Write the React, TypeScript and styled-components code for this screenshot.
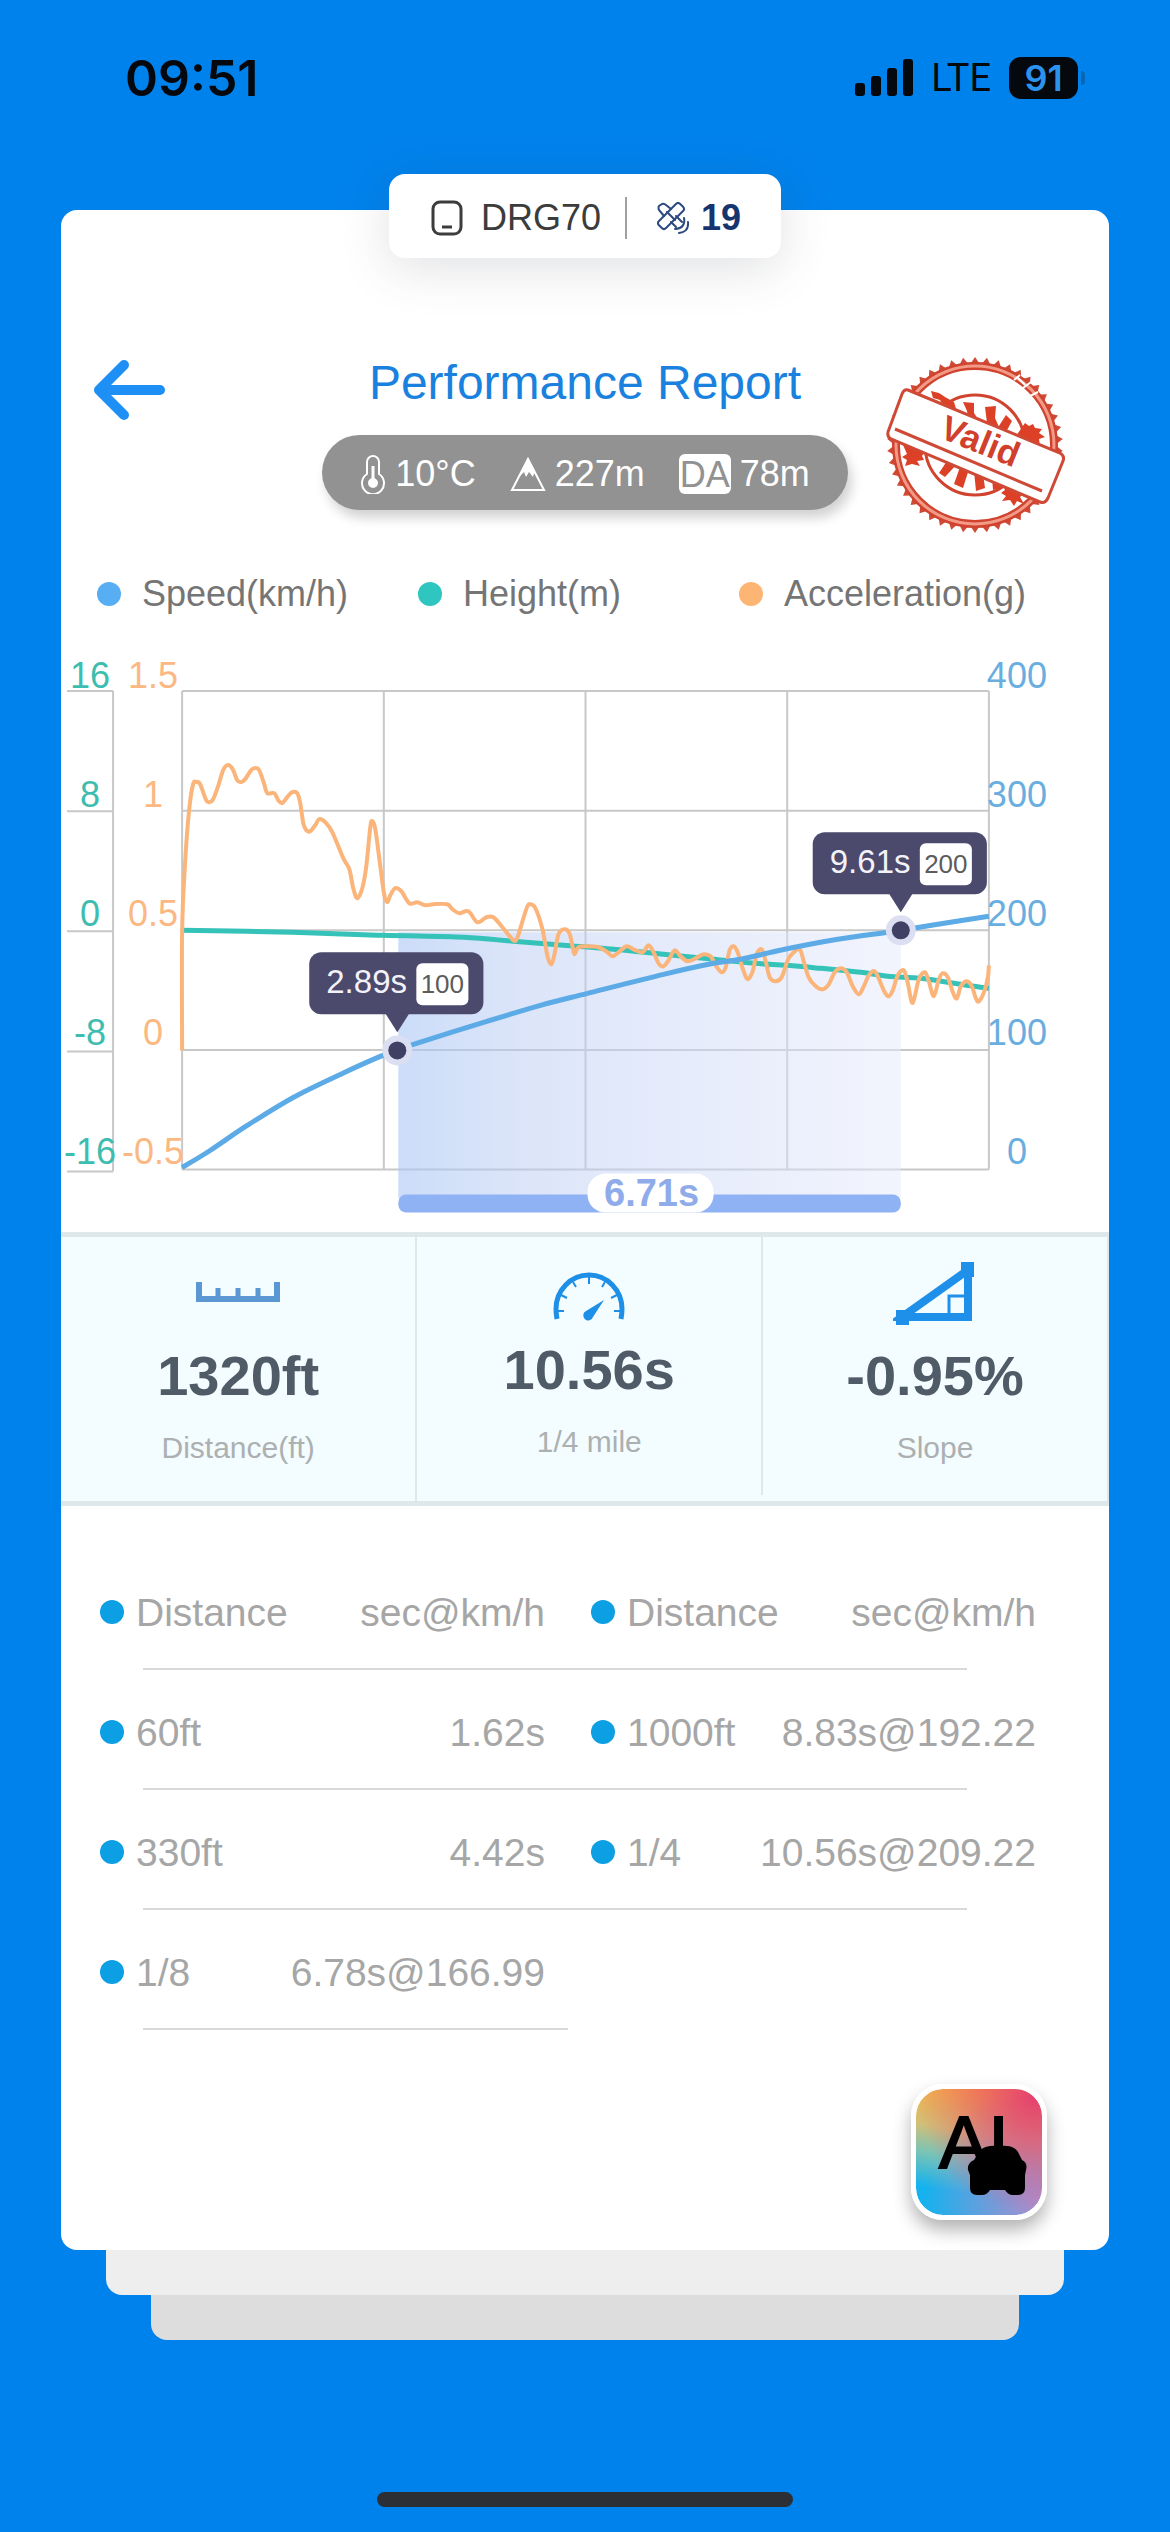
import React from 'react';
import styled, { createGlobalStyle } from 'styled-components';

const GlobalStyle = createGlobalStyle`
	* {
		box-sizing: border-box;
	}

	body {
		margin: 0;
		background-color: #0082ec;
		font-family: 'Liberation Sans', Arial, sans-serif;
	}
`;

const Page = styled.div`
	display: flex;
	flex-direction: column;
	min-height: 100vh;
	background-color: #0082ec;
`;

const StatusBar = styled.div`
	display: flex;
	align-items: center;
	justify-content: space-between;
	height: 156px;
	padding: 0 82px 0 125px;
	color: #05080c;
`;

const Clock = styled.time`
	font-family: Inter, sans-serif;
	font-size: 50px;
	font-weight: 600;
`;

const StatusIcons = styled.div`
	display: flex;
	align-items: center;
	gap: 18px;
`;

const Network = styled.span`
	font-family: Roboto, sans-serif;
	font-size: 38px;
`;

const Battery = styled.span`
	position: relative;
	width: 69px;
	height: 42px;
	margin-right: 10px;
	border-radius: 12px;
	background-color: #05080c;
	color: #2b93ee;
	font-family: Inter, sans-serif;
	font-size: 36px;
	font-weight: 600;
	line-height: 42px;
	text-align: center;

	&::after {
		content: '';
		position: absolute;
		top: 14px;
		right: -7px;
		width: 4px;
		height: 14px;
		border-radius: 0 4px 4px 0;
		background-color: #0a66b4;
	}
`;

const DevicePill = styled.div`
	position: relative;
	z-index: 1;
	display: flex;
	align-items: center;
	align-self: center;
	gap: 18px;
	height: 84px;
	margin: 18px 0 -48px;
	padding: 4px 40px 0 42px;
	border-radius: 16px;
	background-color: #ffffff;
	box-shadow: 0 10px 50px rgba(60, 70, 80, 0.16);
	color: #3c3c3c;
	font-size: 36px;
`;

const PillDivider = styled.span`
	width: 2px;
	height: 42px;
	margin: 0 12px 0 6px;
	background-color: #a0a0a0;
`;

const Satellites = styled.span`
	display: flex;
	align-items: center;
	gap: 12px;
	color: #17346f;
	font-weight: 700;
`;

const Card = styled.main`
	margin: 0 61px;
	padding: 145px 0 30px;
	border-radius: 16px;
	background-color: #ffffff;
`;

const Layer = styled.div<{ inset: number; color: string }>`
	height: 45px;
	margin: 0 ${({ inset }) => inset}px;
	border-radius: 0 0 16px 16px;
	background-color: ${({ color }) => color};
`;

const Header = styled.header`
	display: grid;
	grid-template-columns: 1fr auto 1fr;
	padding: 0 32px;
`;

const BackButton = styled.button`
	align-self: start;
	justify-self: start;
	display: flex;
	margin: 5px 0 0;
	padding: 0;
	border: 0;
	background: none;
	cursor: pointer;
`;

const HeaderCenter = styled.div`
	display: flex;
	flex-direction: column;
	align-items: center;
	gap: 24px;
`;

const Title = styled.h1`
	margin: 0;
	color: #1a82de;
	font-size: 48px;
	font-weight: 400;
	line-height: 56px;
	white-space: nowrap;
`;

const Weather = styled.div`
	display: flex;
	align-items: center;
	gap: 34px;
	height: 75px;
	padding: 2px 38px 0;
	border-radius: 38px;
	background-color: #929292;
	box-shadow: 4px 8px 12px rgba(0, 0, 0, 0.18);
	color: #ffffff;
	font-size: 36px;
`;

const WeatherItem = styled.span`
	display: flex;
	align-items: center;
	gap: 9px;
`;

const AltitudeTag = styled.abbr`
	height: 40px;
	padding: 0 1px;
	border-radius: 6px;
	background-color: #ffffff;
	color: #929292;
	line-height: 42px;
`;

const Stamp = styled.svg`
	justify-self: end;
`;

const Legend = styled.ul`
	display: grid;
	grid-template-columns: repeat(3, 1fr);
	margin: 37px 0 24px;
	padding: 0 49px 0 36px;
	list-style: none;
	color: #757575;
	font-size: 36px;
	line-height: 44px;
	white-space: nowrap;
`;

const LegendItem = styled.li<{ color: string }>`
	display: flex;
	align-items: center;
	gap: 21px;

	&::before {
		content: '';
		width: 24px;
		height: 24px;
		border-radius: 50%;
		background-color: ${({ color }) => color};
	}
`;

const ChartSvg = styled.svg`
	display: block;
	width: 100%;
	font-size: 36px;
`;

const Stats = styled.section`
	display: grid;
	grid-template-columns: 34% 33% 33%;
	border-top: 5px solid #dce8ea;
	border-bottom: 5px solid #dce8ea;
	background-color: #f3fcfe;
`;

const Stat = styled.div<{ raised?: boolean }>`
	display: flex;
	flex-direction: column;
	align-items: center;
	height: ${({ raised }) => (raised ? 258 : 264)}px;
	padding-top: ${({ raised }) => (raised ? 17 : 23)}px;
	border-right: 2px solid #dce8ea;
`;

const StatValue = styled.strong`
	color: #4f5b66;
	font-size: 56px;
	line-height: 64px;
`;

const StatLabel = styled.span`
	margin-top: 22px;
	color: #acb0b1;
	font-size: 30px;
	line-height: 36px;
`;

const Results = styled.table`
	display: block;
	margin: 44px 73px 0 39px;
	color: #a6a6a6;
	font-size: 39px;
	line-height: 48px;
	white-space: nowrap;

	thead,
	tbody {
		display: block;
	}
`;

const ResultRow = styled.tr<{ half?: boolean }>`
	display: grid;
	grid-template-columns: minmax(0, 2fr) minmax(0, 3fr) minmax(0, 2fr) minmax(0, 3fr);
	row-gap: 31px;
	padding-top: 39px;

	&::after {
		content: '';
		grid-column: 1 / ${({ half }) => (half ? 3 : -1)};
		height: 2px;
		margin: 0 ${({ half }) => (half ? 0 : 69)}px 0 43px;
		background-color: #d9d9d9;
	}
`;

const ResultName = styled.th`
	display: flex;
	align-items: center;
	gap: 12px;
	padding: 0;
	font-weight: 400;

	&:nth-child(3) {
		padding-left: 23px;
	}

	&::before {
		content: '';
		flex: none;
		width: 24px;
		height: 24px;
		margin-bottom: 2px;
		border-radius: 50%;
		background-color: #0c9fe4;
	}
`;

const ResultValue = styled.td`
	padding: 0;
	font-weight: 400;
	text-align: right;

	&:nth-child(2) {
		padding-right: 23px;
	}
`;

const AiButton = styled.button`
	display: flex;
	margin: 54px 62px 0 auto;
	padding: 0;
	border: 5px solid #ffffff;
	border-radius: 32px;
	background: radial-gradient(circle at 95% 5%, #e4406f 0%, rgba(228, 64, 111, 0) 70%),
		radial-gradient(circle at 100% 90%, #b48ccb 0%, rgba(180, 140, 203, 0) 70%),
		linear-gradient(190deg, #fbb040 8%, #d0c078 38%, #7cc4b4 56%, #14b2ee 80%);
	background-clip: padding-box;
	box-shadow: 0 10px 18px rgba(0, 0, 0, 0.3);
	cursor: pointer;
`;

const HomeIndicator = styled.div`
	align-self: center;
	width: 416px;
	height: 15px;
	margin: auto 0 25px;
	border-radius: 8px;
	background-color: #2c3036;
`;

type Point = [number, number];

// Plot area is 806 x 478, with its origin at the top left grid corner
const PLOT_WIDTH = 806;
const PLOT_HEIGHT = 478;

const speed: Point[] = [
	[0, 476], [28, 459], [65, 434], [111, 406], [158, 383], [198, 365], [215, 359], [231, 353],
	[298, 332], [358, 314], [405, 302], [481, 283], [531, 272], [558, 268], [602, 258], [655, 248],
	[705, 241], [718, 239], [755, 233], [806, 225],
];

const height: Point[] = [
	[0, 239], [110, 241], [200, 244], [281, 246], [331, 250], [381, 254], [431, 258], [481, 263],
	[531, 268], [571, 272], [605, 274], [638, 277], [678, 281], [705, 285], [738, 287], [771, 292],
	[791, 295], [806, 297],
];

const acceleration: Point[] = [
	[0, 359], [0, 240], [3, 171], [7, 119], [11, 93], [15, 91], [18, 93], [24, 109], [27, 111], [31, 108],
	[36, 95], [41, 79], [46, 74], [51, 79], [55, 89], [59, 91], [63, 88], [69, 79], [73, 77], [77, 79],
	[82, 93], [85, 102], [92, 102], [96, 109], [100, 112], [105, 106], [110, 101], [115, 102], [118, 112],
	[121, 132], [124, 139], [128, 140], [133, 134], [137, 128], [143, 131], [150, 141], [161, 167],
	[167, 178], [171, 197], [175, 207], [180, 197], [184, 175], [188, 136], [190, 130], [193, 138],
	[198, 175], [202, 204], [205, 211], [208, 204], [213, 197], [219, 200], [227, 212], [235, 211],
	[243, 214], [251, 213], [265, 213], [270, 218], [277, 222], [286, 220], [295, 231], [304, 226],
	[311, 226], [320, 236], [331, 249], [335, 246], [340, 230], [345, 215], [348, 213], [353, 217],
	[360, 238], [365, 265], [369, 273], [372, 263], [376, 243], [382, 238], [387, 242], [390, 255],
	[392, 263], [396, 256], [405, 255], [416, 256], [425, 261], [430, 265], [436, 261], [444, 255],
	[451, 258], [460, 261], [466, 254], [471, 261], [476, 272], [481, 275], [486, 269], [492, 259],
	[498, 265], [505, 270], [513, 267], [521, 263], [528, 265], [533, 274], [539, 281], [543, 276],
	[547, 259], [551, 255], [555, 261], [561, 280], [565, 288], [570, 280], [574, 263], [579, 258],
	[583, 270], [587, 286], [593, 290], [599, 286], [605, 269], [610, 262], [617, 258], [621, 270],
	[626, 286], [633, 295], [640, 298], [646, 293], [652, 281], [658, 277], [664, 281], [670, 295],
	[676, 303], [681, 295], [686, 284], [692, 280], [698, 292], [702, 301], [706, 305], [710, 299],
	[715, 284], [721, 279], [725, 292], [729, 311], [732, 305], [736, 288], [742, 281], [746, 290],
	[751, 305], [756, 288], [760, 282], [765, 286], [770, 301], [774, 307], [778, 295], [784, 290],
	[789, 295], [793, 307], [796, 310], [801, 301], [805, 286], [806, 274],
];

// Catmull-Rom spline through all points, written as cubic beziers
const smooth = (points: Point[]): string =>
	points.slice(1).reduce((path, end, i) => {
		const start = points[i];
		const before = points[i - 1] || start;
		const after = points[i + 2] || end;
		const c1 = [start[0] + (end[0] - before[0]) / 6, start[1] + (end[1] - before[1]) / 6];
		const c2 = [end[0] - (after[0] - start[0]) / 6, end[1] - (after[1] - start[1]) / 6];
		return `${path} C${c1.join(' ')} ${c2.join(' ')} ${end.join(' ')}`;
	}, `M${points[0].join(' ')}`);

const axes = [
	{ x: -92, color: '#3dbdb0', labels: ['16', '8', '0', '-8', '-16'] },
	{ x: -29, color: '#fbb883', labels: ['1.5', '1', '0.5', '0', '-0.5'] },
	{ x: 834, color: '#6aaee0', labels: ['400', '300', '200', '100', '0'] },
];

const steps = [0, 1, 2, 3, 4];

function Callout({ x, y, time, value }: { x: number; y: number; time: string; value: string }) {
	return (
		<g transform={`translate(${x} ${y})`}>
			<circle r="15" fill="#dcdff2" />
			<circle r="9" fill="#3f4064" />
			<rect x="-88" y="-98" width="174" height="62" rx="12" fill="#4b496c" />
			<path d="M-12 -37H12L0 -18Z" fill="#4b496c" />
			<text x="-71" y="-57" fontSize="33" fill="#f2f2f8">{time}</text>
			<rect x="19" y="-87" width="52" height="42" rx="6" fill="#ffffff" />
			<text x="45" y="-57" fontSize="26" textAnchor="middle" fill="#5c5c5c">{value}</text>
		</g>
	);
}

function Chart() {
	return (
		<ChartSvg viewBox="-121 -51 1047 591" role="img" aria-label="Speed, height and acceleration over time">
			<defs>
				<linearGradient id="range">
					<stop offset="0" stopColor="#a9c6f5" stopOpacity="0.6" />
					<stop offset="0.25" stopColor="#b9cbf3" stopOpacity="0.5" />
					<stop offset="1" stopColor="#e6eafc" stopOpacity="0.5" />
				</linearGradient>
			</defs>
			<g stroke="#c8c8c8" strokeWidth="2" fill="none">
				{steps.map((i) => (
					<path
						key={i}
						d={`M0 ${(i * PLOT_HEIGHT) / 4}H${PLOT_WIDTH} M${(i * PLOT_WIDTH) / 4} 0V${PLOT_HEIGHT} M-115 ${i * 120}H-69`}
					/>
				))}
				<path d="M-69 0V480" />
			</g>
			<rect x="216" y="241" width="502" height="266" fill="url(#range)" />
			{axes.map((axis) =>
				axis.labels.map((label, i) => (
					<text key={axis.x + label} x={axis.x} y={i * 119 - 3} textAnchor="middle" fill={axis.color}>
						{label}
					</text>
				))
			)}
			<g fill="none">
				<path d={smooth(height)} stroke="#35c2b8" strokeWidth="5" />
				<path d={smooth(acceleration)} stroke="#fbb57b" strokeWidth="4" strokeLinejoin="round" />
				<path d={smooth(speed)} stroke="#5dabe6" strokeWidth="5" />
			</g>
			<rect x="216" y="503" width="502" height="18" rx="8" fill="#8fb2f5" />
			<rect x="405" y="482" width="126" height="39" rx="18" fill="#ffffff" />
			<text x="469" y="514" fontSize="38" fontWeight="700" textAnchor="middle" fill="#90abe9">6.71s</text>
			<Callout x={215} y={359} time="2.89s" value="100" />
			<Callout x={718} y={239} time="9.61s" value="200" />
		</ChartSvg>
	);
}

const teeth = Array.from({ length: 46 }, (_, i) => (i * 360) / 46);

function ValidStamp() {
	return (
		<Stamp width="204" height="180" viewBox="0 0 204 180">
			<g fill="#cf4a36">
				{teeth.map((angle) => (
					<path key={angle} d="M-4 -82L0 -88L4 -82Z" transform={`translate(102 90) rotate(${angle})`} />
				))}
			</g>
			<circle cx="102" cy="90" r="79" fill="none" stroke="#d0432e" strokeWidth="8" />
			<circle cx="102" cy="90" r="79" fill="none" stroke="#f39a86" strokeWidth="3" />
			<circle cx="102" cy="90" r="50" fill="none" stroke="#d0432e" strokeWidth="3" />
			<g fill="#dc4128">
				<path d="M90 47l11 1 0 10 4 6 -10 -2 -1 -6z" />
				<path d="M112 52l11 -1 -1 12 4 9 -12 -4z" />
				<path d="M133 60l6 6 -6 11 -9 -3z" />
				<path d="M58 36l2 7 7 2 4 8 13 4 -3 -10 -9 -5 -6 -4z" />
				<path d="M152 68l4 3 4 -2 2 4 7 1 -3 4 6 4 -6 2 1 7 -8 -3 -2 5 -12 -6 -2 -6z" />
				<path d="M30 90l7 2 4 -1 6 5 6 -1 -4 6 2 4 -7 1 3 5 -8 -2 -7 2 2 -6 -5 -3 5 -3z" />
				<path d="M74 106l10 3 -12 13 -6 -4z" />
				<path d="M87 112l9 2 -6 19 -9 -4z" />
				<path d="M101 116l9 3 2 14 -9 3z" />
				<path d="M119 122l6 2 3 9 -8 2z" />
				<path d="M128 126l14 6 8 7 -3 3 4 7 -7 -3 -3 5 -4 -6 -8 1 4 -5 -5 -3 4 -3z" />
			</g>
			<path
				d="M35 35L187 98Q192 101 190 106L175 143Q172 149 167 147L18 84Q14 82 15 77L29 39Q31 34 35 35Z"
				fill="#ffffff"
				stroke="#cf4a36"
				strokeWidth="3"
			/>
			<path d="M22 74L169 136" stroke="#cf4a36" strokeWidth="3" />
			<path d="M141 25l6 -5 M150 33l8 -6 M157 41l8 -4 M144 22l8 8" stroke="#ffffff" strokeWidth="2" />
			<text
				transform="translate(107 87) rotate(22)"
				y="11"
				textAnchor="middle"
				fontSize="35"
				fontWeight="700"
				fill="#d0402c"
			>
				Valid
			</text>
		</Stamp>
	);
}

const results = [
	['60ft', '1.62s', '1000ft', '8.83s@192.22'],
	['330ft', '4.42s', '1/4', '10.56s@209.22'],
	['1/8', '6.78s@166.99'],
];

function App(): JSX.Element {
	return (
		<>
			<GlobalStyle />
			<Page>
				<StatusBar>
					<Clock>09:51</Clock>
					<StatusIcons>
						<svg width="58" height="38" viewBox="0 0 58 38" fill="#05080c">
							<rect x="0" y="24" width="10" height="13" rx="3" />
							<rect x="16" y="17" width="10" height="20" rx="3" />
							<rect x="32" y="9" width="10" height="28" rx="3" />
							<rect x="48" y="0" width="10" height="37" rx="3" />
						</svg>
						<Network>LTE</Network>
						<Battery>91</Battery>
					</StatusIcons>
				</StatusBar>

				<DevicePill>
					<svg width="32" height="36" viewBox="0 0 32 36" fill="none" stroke="#3c3c3c" strokeWidth="3">
						<rect x="2" y="2" width="28" height="32" rx="7" />
						<path d="M11 27H21" />
					</svg>
					DRG70
					<PillDivider />
					<Satellites>
						<svg width="32" height="32" viewBox="0 0 32 32" fill="none" stroke="#2d4a80" strokeWidth="2" strokeLinecap="round">
							<rect x="-5" y="-15" width="10" height="30" rx="3" transform="translate(14 14) rotate(45)" />
							<path d="M7 14L2 8Q1 6 2 4L5 2Q7 1 9 3L14 7 M19 14L25 20 M14 20L19 25 M10 10L18 18" />
							<path d="M27 16Q29 26 18 27 M31 20Q32 30 22 31" />
						</svg>
						19
					</Satellites>
				</DevicePill>

				<Card>
					<Header>
						<BackButton aria-label="Back">
							<svg width="72" height="60" viewBox="0 0 72 60" fill="none" stroke="#1e90f5" strokeWidth="10" strokeLinecap="round" strokeLinejoin="round">
								<path d="M31 5L6 30L31 55 M6 30H67" />
							</svg>
						</BackButton>
						<HeaderCenter>
							<Title>Performance Report</Title>
							<Weather>
								<WeatherItem>
									<svg width="26" height="40" viewBox="0 0 26 40" fill="none" stroke="#ffffff" strokeWidth="2">
										<path d="M7 20V8a6 6 0 0 1 12 0V20a11 11 0 1 1 -12 0Z" />
										<path d="M13 12V26" strokeWidth="3" />
										<circle cx="13" cy="29" r="4" fill="#ffffff" />
									</svg>
									10°C
								</WeatherItem>
								<WeatherItem>
									<svg width="36" height="36" viewBox="0 0 36 36" fill="none" stroke="#ffffff" strokeWidth="2">
										<path d="M18 3L2 34H34Z" />
										<path d="M18 2L9 21L14 16L16 21L19 16L23 21L24 17L28 21Z" fill="#ffffff" stroke="none" />
									</svg>
									227m
								</WeatherItem>
								<WeatherItem>
									<AltitudeTag>DA</AltitudeTag>
									78m
								</WeatherItem>
							</Weather>
						</HeaderCenter>
						<ValidStamp />
					</Header>

					<Legend>
						<LegendItem color="#58aef2">Speed(km/h)</LegendItem>
						<LegendItem color="#2fc6c0">Height(m)</LegendItem>
						<LegendItem color="#fdb573">Acceleration(g)</LegendItem>
					</Legend>

					<Chart />

					<Stats>
						<Stat>
							<svg width="84" height="84" viewBox="0 0 84 84" fill="none" stroke="#5b97d3">
								<path d="M3 22V39H81V22" strokeWidth="6" />
								<path d="M22 28V38 M42 28V38 M62 28V38" strokeWidth="5" />
							</svg>
							<StatValue>1320ft</StatValue>
							<StatLabel>Distance(ft)</StatLabel>
						</Stat>
						<Stat raised>
							<svg width="84" height="84" viewBox="0 0 84 84" fill="none" stroke="#1e8fe6">
								<path d="M10 65Q9 59 9 55A33 34 0 0 1 75 55Q75 59 74 65" strokeWidth="5" />
								<path d="M11 57H17 M67 57H73 M14 41L20 44 M70 41L64 44 M26 28L29 33 M58 28L55 33 M42 22V30" strokeWidth="2" />
								<path d="M57 46L46 63A5 5 0 1 1 39 57Z" fill="#1e8fe6" stroke="none" />
							</svg>
							<StatValue>10.56s</StatValue>
							<StatLabel>1/4 mile</StatLabel>
						</Stat>
						<Stat>
							<svg width="84" height="84" viewBox="0 0 84 84" fill="none" stroke="#1e90ea">
								<path d="M9 57L75 10V57Z" strokeWidth="8" />
								<path d="M56 54V36H73" strokeWidth="3" />
								<path d="M3 50H16V65H3Z M68 2H81V17H68Z" fill="#1e90ea" stroke="none" />
							</svg>
							<StatValue>-0.95%</StatValue>
							<StatLabel>Slope</StatLabel>
						</Stat>
					</Stats>

					<Results>
						<thead>
							<ResultRow>
								<ResultName>Distance</ResultName>
								<ResultValue as="th">sec@km/h</ResultValue>
								<ResultName>Distance</ResultName>
								<ResultValue as="th">sec@km/h</ResultValue>
							</ResultRow>
						</thead>
						<tbody>
							{results.map(([name, value, nextName, nextValue]) => (
								<ResultRow key={name} half={!nextName}>
									<ResultName scope="row">{name}</ResultName>
									<ResultValue>{value}</ResultValue>
									{nextName && <ResultName>{nextName}</ResultName>}
									{nextValue && <ResultValue>{nextValue}</ResultValue>}
								</ResultRow>
							))}
						</tbody>
					</Results>

					<AiButton aria-label="AI car assistant">
						<svg width="126" height="126" viewBox="0 0 126 126">
							<text x="23" y="79" fontSize="74" fill="#000000" stroke="#000000" strokeWidth="2">AI</text>
							<path d="M63 63Q66 58 74 57Q83 56 92 57Q99 58 102 63L106 71Q112 74 110 81L109 86V99Q109 106 102 106H97Q92 106 89 101H74Q71 106 66 106H61Q54 106 54 99V86L52 81Q51 74 58 71Z" />
						</svg>
					</AiButton>
				</Card>
				<Layer inset={106} color="#eeeeee" />
				<Layer inset={151} color="#dddddd" />

				<HomeIndicator />
			</Page>
		</>
	);
}

export default App;
